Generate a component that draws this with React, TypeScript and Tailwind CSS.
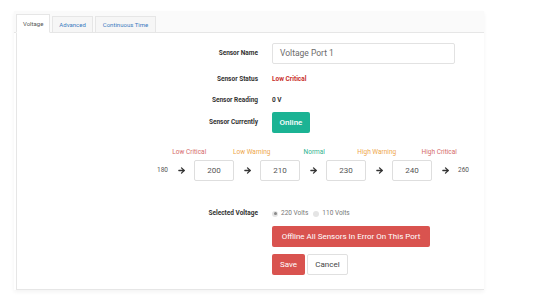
import React, { useState } from 'react';
import { ArrowRight } from 'lucide-react';

const font = { fontFamily: 'Roboto, "Liberation Sans", sans-serif' };

const thresholds = [
    { label: 'Low Critical', color: 'text-[#d46a6a]' },
    { label: 'Low Warning', color: 'text-[#eea64a]' },
    { label: 'Normal', color: 'text-[#2fb38f]' },
    { label: 'High Warning', color: 'text-[#eea64a]' },
    { label: 'High Critical', color: 'text-[#d46a6a]' },
];

function Row({ label, children, className }: { label: string; children: React.ReactNode; className: string }) {
    return (
        <div className={`flex items-center ${className}`}>
            <div className="w-[241px] text-right text-[6.5px] font-bold text-[#333]">{label}</div>
            <div className="ml-[14px] flex items-center">{children}</div>
        </div>
    );
}

function Arrow() {
    return <ArrowRight className="w-[9px] h-[9px] text-[#333] shrink-0" strokeWidth={3.5} />;
}

function ValueBox({ value }: { value: string }) {
    return (
        <div className="w-[40px] h-[21px] border border-[#dedede] rounded-[2px] flex items-center justify-center text-[8px] text-[#555] shrink-0">
            {value}
        </div>
    );
}

export default function App() {
    const [voltage, setVoltage] = useState('220');

    return (
        <div className="w-[533px] h-[308px] bg-white pt-[11px] pl-[14px]" style={font}>
            <div className="w-[470px] shadow-[0_2px_4px_rgba(0,0,0,0.05)]">
                {/* Tabs */}
                <div className="h-[22px] bg-[#fafafa] border-b border-[#e6e6e6] flex items-end pl-[2px] gap-[2px]">
                    <div className="h-[19px] -mb-px bg-white border border-b-white border-[#e6e6e6] px-[6px] flex items-center text-[6px] text-[#555]">
                        Voltage
                    </div>
                    <div className="h-[16px] bg-[#f6f6f6] border border-b-0 border-[#e6e6e6] px-[6px] flex items-center text-[6px] text-[#3a7bbf]">
                        Advanced
                    </div>
                    <div className="h-[16px] bg-[#f6f6f6] border border-b-0 border-[#e6e6e6] px-[7px] flex items-center text-[6px] text-[#3a7bbf]">
                        Continuous Time
                    </div>
                </div>

                {/* Content */}
                <div className="ml-[2px] h-[257px] bg-white border-l border-b border-[#e6e6e6] pt-[10px] flex flex-col">
                    <Row label="Sensor Name" className="h-[21px]">
                        <div className="w-[183px] h-[21px] border border-[#e2e2e2] rounded-[2px] px-[7px] flex items-center text-[8.5px] text-[#6b6b6b]">
                            Voltage Port 1
                        </div>
                    </Row>
                    <Row label="Sensor Status" className="mt-[6px] h-[20px]">
                        <span className="text-[6.5px] font-bold text-[#c9302c]">Low Critical</span>
                    </Row>
                    <Row label="Sensor Reading" className="mt-[1px] h-[20px]">
                        <span className="text-[6.5px] font-bold text-[#333]">0 V</span>
                    </Row>
                    <Row label="Sensor Currently" className="mt-[1px] h-[21px]">
                        <button className="h-[21px] w-[38px] rounded-[2px] bg-[#1bb394] text-white text-[8px] font-medium flex items-center justify-center">
                            Online
                        </button>
                    </Row>

                    {/* Thresholds */}
                    <div className="mt-[15px] h-[10px] pl-[141px] flex items-center">
                        {thresholds.map(t => (
                            <div key={t.label} className={`w-[62.5px] text-center text-[6.5px] ${t.color}`}>
                                {t.label}
                            </div>
                        ))}
                    </div>
                    <div className="mt-[2px] h-[21px] pl-[140px] flex items-center gap-[8.5px]">
                        <span className="w-[11px] text-[6.5px] text-[#555]">180</span>
                        <Arrow />
                        <ValueBox value="200" />
                        <Arrow />
                        <ValueBox value="210" />
                        <Arrow />
                        <ValueBox value="230" />
                        <Arrow />
                        <ValueBox value="240" />
                        <Arrow />
                        <span className="text-[6.5px] text-[#555]">260</span>
                    </div>

                    <Row label="Selected Voltage" className="mt-[25px] h-[15px]">
                        <label className="flex items-center gap-[3px] text-[6.5px] text-[#777]">
                            <span
                                onClick={() => setVoltage('220')}
                                className="w-[6px] h-[6px] rounded-full bg-[#e4e4e4] flex items-center justify-center"
                            >
                                {voltage === '220' && <span className="w-[3px] h-[3px] rounded-full bg-[#888]" />}
                            </span>
                            220 Volts
                        </label>
                        <label className="ml-[5px] flex items-center gap-[3px] text-[6.5px] text-[#777]">
                            <span
                                onClick={() => setVoltage('110')}
                                className="w-[6px] h-[6px] rounded-full bg-[#e4e4e4] flex items-center justify-center"
                            >
                                {voltage === '110' && <span className="w-[3px] h-[3px] rounded-full bg-[#888]" />}
                            </span>
                            110 Volts
                        </label>
                    </Row>
                    <div className="mt-[5px] pl-[255px]">
                        <button className="h-[21px] w-[158px] rounded-[2px] bg-[#d9534f] text-white text-[8px] flex items-center justify-center">
                            Offline All Sensors In Error On This Port
                        </button>
                    </div>
                    <div className="mt-[7px] pl-[255px] flex gap-[2px]">
                        <button className="h-[21px] w-[33px] rounded-[2px] bg-[#d9534f] text-white text-[8px] flex items-center justify-center">
                            Save
                        </button>
                        <button className="h-[21px] w-[41px] rounded-[2px] bg-white border border-[#e0e0e0] text-[#444] text-[8px] flex items-center justify-center">
                            Cancel
                        </button>
                    </div>
                </div>
            </div>
        </div>
    );
}
